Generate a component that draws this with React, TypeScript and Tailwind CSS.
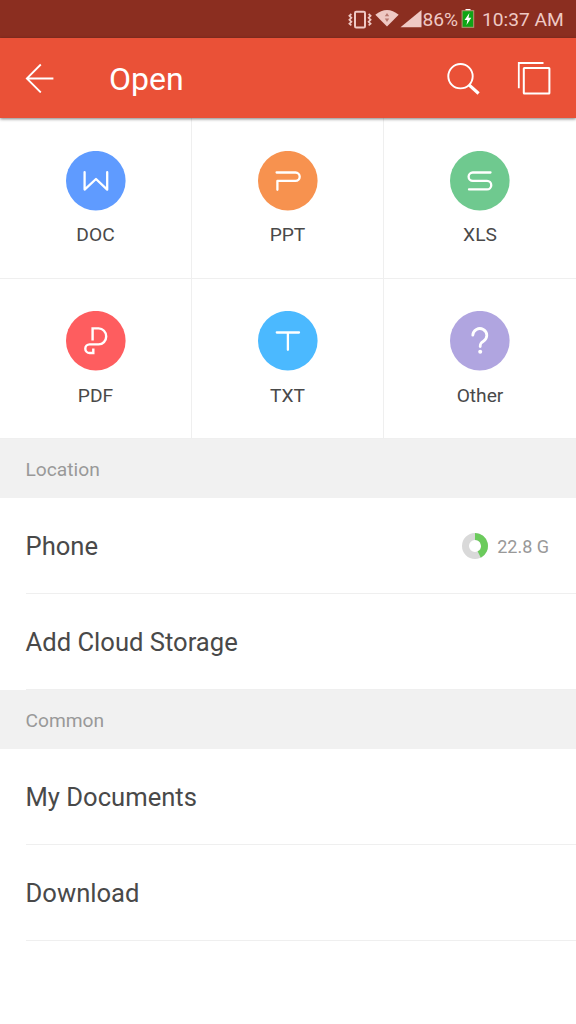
import type { ReactNode } from "react";

type FileType = { label: string; color: string; glyph: ReactNode };

const fileTypes: FileType[] = [
  { label: "DOC", color: "text-[#5f9bff]", glyph: <path d="M18.6 21.2V38.6L30 28L41.2 38.6V21.2" /> },
  { label: "PPT", color: "text-[#f7924f]", glyph: <path d="M18.6 21.5H37.5A4.2 4.2 0 0 1 37.5 29.9H19.4V38.8" /> },
  { label: "XLS", color: "text-[#6fc98f]", glyph: <path d="M40.5 21.5H22.8A4.2 4.2 0 0 0 22.8 29.9H37A4.2 4.2 0 0 1 37 38.4H19" /> },
  {
    label: "PDF",
    color: "text-[#fe5d5f]",
    glyph: <path d="M26.6 29.5V17.4H32.6A7.6 8 0 0 1 32.6 33.4H23.6A4.2 4.2 0 0 0 23.6 42H27.3V37.4" strokeWidth="2.4" strokeLinecap="butt" strokeLinejoin="miter" />,
  },
  { label: "TXT", color: "text-[#4bb9ff]", glyph: <path d="M18.8 21.5H41M29.9 21.5V38.8" /> },
  {
    label: "Other",
    color: "text-[#b0a5e0]",
    glyph: (
      <>
        <path d="M22.8 24.2A7 6.8 0 1 1 33.4 30.2C31 31.7 30.2 32.4 30.2 35.6" strokeWidth="2.8" />
        <circle cx="30.2" cy="40.8" r="2" fill="white" stroke="none" />
      </>
    ),
  },
];

function StatusBar() {
  return (
    <div className="flex h-[38px] items-center bg-[#8b2e20] pl-[348px] text-[19.2px] leading-none text-[#efc9c4]">
      <svg className="mt-px h-5 w-6 shrink-0" viewBox="0 0 24 20" fill="none" stroke="currentColor">
        <rect x="7" y="1.8" width="10" height="15.6" rx="1.2" strokeWidth="2" />
        <path d="M3.4 4L1.4 5.8L3.4 7.8L1.4 9.8L3.4 11.8L1.4 13.8L3.4 15.4M20.6 4L22.6 5.8L20.6 7.8L22.6 9.8L20.6 11.8L22.6 13.8L20.6 15.4" strokeWidth="1.7" />
      </svg>
      <svg className="ml-[3px] h-5 w-6 shrink-0" viewBox="0 0 24 20">
        <path d="M.3 5.8Q12 -3.6 23.7 5.8L12 17.5Z" fill="currentColor" />
        <path d="M12 4L14.2 7.2H9.8ZM12 13L9.8 9.6H14.2Z" fill="#b87970" />
      </svg>
      <svg className="ml-[1px] h-5 w-[22px] shrink-0" viewBox="0 0 22 20">
        <path d="M.5 18.3L21.5 1V18.3Z" fill="currentColor" />
      </svg>
      <span className="w-[38px] shrink-0 pt-px pl-[0.5px]">86%</span>
      <svg className="ml-[1px] h-5 w-[14px] shrink-0" viewBox="0 0 14 20">
        <path d="M4.5 0H9.5V2H4.5Z" fill="white" />
        <rect x="1.1" y="1.7" width="11.6" height="16.6" fill="#0fa516" stroke="#b39a77" />
        <path d="M8.4 4L3.6 11H6.4L5.5 16L10.3 8.8H7.5Z" fill="white" />
      </svg>
      <span className="ml-[7px] pt-px whitespace-nowrap">10:37 AM</span>
    </div>
  );
}

function Header() {
  return (
    <header className="relative z-10 flex h-20 items-center bg-[#ea5137] pr-[25px] pl-[25px] text-white shadow-[0_1px_3px_rgba(0,0,0,0.5)]">
      <svg className="size-[30px]" viewBox="0 0 30 30" fill="none" stroke="currentColor" strokeWidth="1.8">
        <path d="M28.4 15.5H2M15.8 1.5L1.8 15.5L15.8 29.5" />
      </svg>
      <h1 className="ml-[54px] pt-0.5 text-[32px] leading-10 font-normal">Open</h1>
      <svg className="ml-auto size-[34px]" viewBox="0 0 34 34" fill="none" stroke="currentColor">
        <circle cx="14.5" cy="15.2" r="12.2" strokeWidth="1.9" />
        <path d="M23 23.9L32.6 32.5" strokeWidth="3.2" />
      </svg>
      <svg className="ml-[37px] size-[34px]" viewBox="0 0 34 34" fill="none" stroke="currentColor" strokeWidth="1.8">
        <path d="M1.8 27.3V2H26.5" />
        <rect x="6.8" y="7.1" width="25.6" height="25.4" rx="0.5" strokeWidth="2" />
      </svg>
    </header>
  );
}

function SectionTitle({ children }: { children: string }) {
  return (
    <h2 className="flex h-[59px] items-center bg-[#f1f1f1] pt-[3px] pl-[25.5px] text-[19.2px] font-normal text-[#999999]">
      {children}
    </h2>
  );
}

function Row({ label, children }: { label: string; children?: ReactNode }) {
  return (
    <div className="ml-[25.5px] flex h-24 items-center border-b border-[#efefef] pr-[27px] text-[25.6px] text-[#494949]">
      <span className="pt-px">{label}</span>
      {children}
    </div>
  );
}

export default function App() {
  return (
    <main className="h-[1024px] w-[576px] overflow-hidden bg-white font-['Roboto',sans-serif]">
      <StatusBar />
      <Header />
      <div className="grid grid-cols-3">
        {fileTypes.map(({ label, color, glyph }) => (
          <div
            key={label}
            className="flex h-[160.5px] flex-col items-center border-r border-b border-[#efefef] pt-[32.5px] nth-[3n]:border-r-0"
          >
            <svg className={`size-[60px] shrink-0 ${color}`} viewBox="0 0 60 60" fill="none">
              <circle cx="29.8" cy="29.7" r="29.8" fill="currentColor" />
              <g stroke="white" strokeWidth="2.3" strokeLinecap="round" strokeLinejoin="round">
                {glyph}
              </g>
            </svg>
            <span className="mt-[10.5px] text-[19.2px] leading-7 text-[#494949]">{label}</span>
          </div>
        ))}
      </div>
      <SectionTitle>Location</SectionTitle>
      <Row label="Phone">
        <svg className="ml-auto size-[26px]" viewBox="0 0 26 26" fill="none" strokeWidth="7">
          <circle cx="13" cy="13" r="9.5" stroke="#d9d9d9" />
          <path d="M13 3.5A9.5 9.5 0 0 1 17.2 21.5" stroke="#6bcb5c" />
        </svg>
        <span className="ml-[9px] pt-0.5 text-[18px] text-[#999999]">22.8 G</span>
      </Row>
      <Row label="Add Cloud Storage" />
      <SectionTitle>Common</SectionTitle>
      <Row label="My Documents" />
      <Row label="Download" />
    </main>
  );
}
